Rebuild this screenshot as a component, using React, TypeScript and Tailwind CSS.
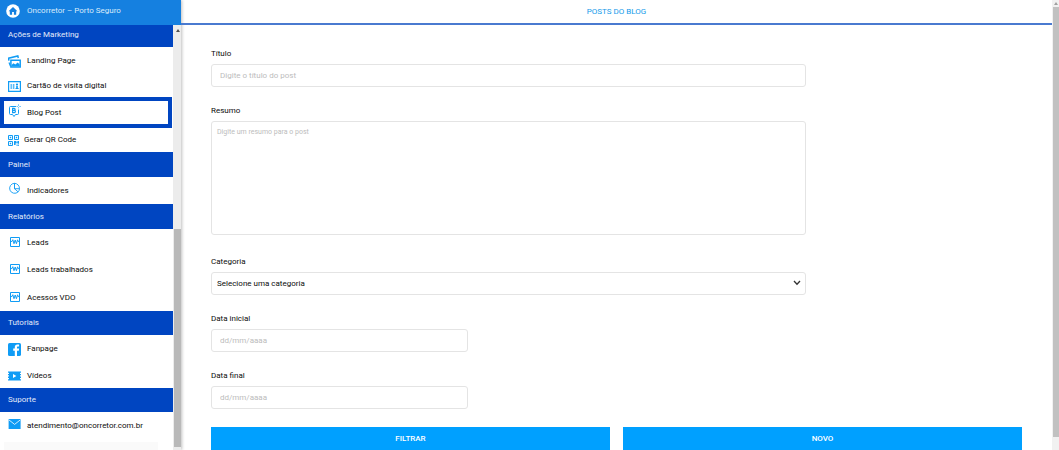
import type { ReactNode } from "react";

interface MenuItem {
  label: string;
  icon: ReactNode;
  className: string;
  active?: boolean;
}

interface MenuSection {
  title: string;
  className: string;
  items: MenuItem[];
}

const sections: MenuSection[] = [
  {
    title: "Ações de Marketing",
    className: "h-[22px] pb-0.5",
    items: [
      { label: "Landing Page", icon: <PicturesIcon />, className: "h-7 gap-1.5" },
      { label: "Cartão de visita digital", icon: <CardIcon />, className: "h-[22px] gap-1.5" },
      { label: "Blog Post", icon: <BlogIcon />, className: "h-[31px] gap-1.5", active: true },
      { label: "Gerar QR Code", icon: <QrIcon />, className: "h-6 gap-1" },
    ],
  },
  {
    title: "Painel",
    className: "h-[25px]",
    items: [{ label: "Indicadores", icon: <PieIcon />, className: "h-[27px] gap-1.5" }],
  },
  {
    title: "Relatórios",
    className: "h-[25px]",
    items: [
      { label: "Leads", icon: <PulseIcon />, className: "h-[27px] gap-1.5" },
      { label: "Leads trabalhados", icon: <PulseIcon />, className: "h-7 gap-1.5" },
      { label: "Acessos VDO", icon: <PulseIcon />, className: "h-[27px] gap-1.5" },
    ],
  },
  {
    title: "Tutoriais",
    className: "h-6",
    items: [
      { label: "Fanpage", icon: <FacebookIcon />, className: "h-7 gap-1.5" },
      { label: "Vídeos", icon: <FilmIcon />, className: "h-[25px] gap-1.5" },
    ],
  },
  {
    title: "Suporte",
    className: "h-6",
    items: [
      { label: "atendimento@oncorretor.com.br", icon: <MailIcon />, className: "h-7 gap-1.5" },
    ],
  },
];

const controlClass =
  "block w-full rounded-[3px] border border-[#e4e4e4] bg-white leading-3 outline-none placeholder:text-[#bcbcbc]";

export default function App() {
  return (
    <div className="flex h-screen overflow-hidden bg-white font-[Roboto,sans-serif] text-[8px] leading-3 text-[#0c0c0c]">
      <Sidebar />
      <main className="flex min-w-0 flex-1 flex-col">
        <header className="flex h-[25px] shrink-0 items-center justify-center border-b-2 border-[#4a7ad0]">
          <h1 className="text-[#159bea]">POSTS DO BLOG</h1>
        </header>
        <PostFilterForm />
      </main>
      <div className="flex w-[7px] shrink-0 flex-col bg-[#f1f1f1] pl-px" aria-hidden="true">
        <div className="flex h-[7px] items-center justify-center text-[#a0a0a0]">
          <ScrollArrow />
        </div>
        <div className="flex-1 bg-[#c1c1c1]" />
        <div className="h-[13px]" />
      </div>
    </div>
  );
}

function Sidebar() {
  return (
    <aside className="flex w-[181px] shrink-0 flex-col shadow-[1px_0_3px_rgba(0,0,0,0.25)]">
      <a
        href="#"
        className="flex h-[25px] shrink-0 items-center gap-[7px] bg-[#1580e0] pb-[3px] pl-1.5 text-[#d9ebfb]"
      >
        <HomeIcon />
        Oncorretor – Porto Seguro
      </a>
      <div className="flex min-h-0 flex-1">
        <nav className="min-w-0 flex-1 overflow-hidden">
          {sections.map((section) => (
            <section key={section.title}>
              <h2
                className={`flex items-center bg-[#0045c1] pl-2 text-[#e3ecfa] ${section.className}`}
              >
                {section.title}
              </h2>
              <ul>
                {section.items.map((item) => (
                  <li key={item.label}>
                    <MenuLink item={item} />
                  </li>
                ))}
              </ul>
            </section>
          ))}
          <div className="mt-[2px] mr-[15px] ml-1 h-4 bg-[#fafafa]" />
        </nav>
        <div className="flex w-2 shrink-0 flex-col bg-[#ececec] pl-px" aria-hidden="true">
          <div className="flex h-2.5 items-center justify-center text-[#505050]">
            <ScrollArrow />
          </div>
          <div className="flex-[194]" />
          <div className="flex-[218] bg-[#b9b9b9]" />
          <div className="h-[3px]" />
        </div>
      </div>
    </aside>
  );
}

function MenuLink({ item }: { item: MenuItem }) {
  return (
    <a
      href="#"
      aria-current={item.active ? "page" : undefined}
      className={`flex items-center whitespace-nowrap ${item.className} ${
        item.active ? "mr-px border-4 border-[#0045c1] pl-1" : "pl-2"
      }`}
    >
      <span className="flex shrink-0 text-[#109cf5]">{item.icon}</span>
      {item.label}
    </a>
  );
}

function PostFilterForm() {
  return (
    <form className="flex flex-col gap-[18px] px-[30px] pt-[23px]">
      <Field id="titulo" label="Título">
        <input
          id="titulo"
          type="text"
          placeholder="Digite o título do post"
          className={`${controlClass} h-[23px] px-2 text-[8px]`}
        />
      </Field>
      <Field id="resumo" label="Resumo">
        <textarea
          id="resumo"
          placeholder="Digite um resumo para o post"
          className={`${controlClass} mb-[3px] h-[114px] resize-none px-[5px] py-1 text-[7px]`}
        />
      </Field>
      <Field id="categoria" label="Categoria">
        <div className="relative">
          <select
            id="categoria"
            className={`${controlClass} h-[23px] appearance-none px-[5px] text-[8px]`}
          >
            <option>Selecione uma categoria</option>
          </select>
          <svg
            viewBox="0 0 8 6"
            className="pointer-events-none absolute top-2 right-[5px] h-1.5 w-2"
            fill="none"
            stroke="#333"
            strokeWidth="1.3"
          >
            <path d="M1 1l3 3.3L7 1" />
          </svg>
        </div>
      </Field>
      <Field id="data-inicial" label="Data inicial">
        <input
          id="data-inicial"
          type="text"
          placeholder="dd/mm/aaaa"
          className={`${controlClass} h-[23px] max-w-[257px] px-2 text-[8px]`}
        />
      </Field>
      <Field id="data-final" label="Data final">
        <input
          id="data-final"
          type="text"
          placeholder="dd/mm/aaaa"
          className={`${controlClass} h-[23px] max-w-[257px] px-2 text-[8px]`}
        />
      </Field>
      <div className="grid grid-cols-2 gap-[13px]">
        <button type="button" className="h-6 bg-[#00a0ff] font-medium text-white">
          FILTRAR
        </button>
        <button type="button" className="h-6 bg-[#00a0ff] font-medium text-white">
          NOVO
        </button>
      </div>
    </form>
  );
}

interface FieldProps {
  id: string;
  label: string;
  children: ReactNode;
}

function Field({ id, label, children }: FieldProps) {
  return (
    <div className="flex w-full max-w-[595px] flex-col gap-1">
      <label htmlFor={id}>{label}</label>
      {children}
    </div>
  );
}

function ScrollArrow() {
  return (
    <svg viewBox="0 0 4 3" className="h-[3px] w-1" fill="currentColor">
      <path d="M0 3l2-3 2 3z" />
    </svg>
  );
}

function HomeIcon() {
  return (
    <svg viewBox="0 0 14 14" className="size-3.5 shrink-0">
      <circle cx="7" cy="7" r="6.8" fill="#fff" />
      <path d="M7 3L2.6 7.2h1.2v3.6h2.3V8h1.8v2.8h2.3V7.2h1.2z" fill="#1580e0" />
    </svg>
  );
}

function PicturesIcon() {
  return (
    <svg viewBox="0 0 13 13" className="size-[13px]" fill="none" stroke="currentColor">
      <path d="M.9 5.6L.6 3.2 9.8 1l.5 2" strokeWidth="1.5" />
      <path d="M2.9 5.2h9.3v6.9H2.9z" strokeWidth="1.5" />
      <path d="M3.5 11.5V10l2-1.800 1.800 1.400 2.400-2.200 2 2v2.100z" fill="currentColor" stroke="none" />
      <path d="M1 7.500l1.500 3.700" strokeWidth="1.200" />
    </svg>
  );
}

function CardIcon() {
  return (
    <svg viewBox="0 0 13 11" className="h-[11px] w-[13px]">
      <path d="M.6.6h11.8v9.8H.6z" fill="none" stroke="currentColor" strokeWidth="1.2" />
      <path d="M2.5 3h1.4v5H2.5zM4.8 3h1.600v5H4.800z" fill="currentColor" opacity=".7" />
      <circle cx="9" cy="3.6" r="1.1" fill="currentColor" />
      <path d="M8.2 5h1.600v2h.8v1H7.500V7h.7z" fill="currentColor" />
    </svg>
  );
}

function BlogIcon() {
  return (
    <svg
      viewBox="0 0 13 14"
      className="mb-1 h-3.5 w-[13px]"
      fill="none"
      stroke="currentColor"
      strokeWidth="1"
    >
      <path d="M8 2.5H2.5q-1 0-1 1v6q0 1 1 1h2L6 12.500l1.500-2h2q1 0 1-1V5.500" />
      <path d="M4.600 4.400v4.200h1.700a1.100 1.100 0 0 0 0-2.200H4.600h1.500a1 1 0 0 0 0-2z" strokeWidth="1.2" />
      <path d="M10.500.4v1.400M10.500 3.200v1.200M8.600 2.500h1.200M11.400 2.500h1.400" opacity=".7" />
    </svg>
  );
}

function QrIcon() {
  return (
    <svg viewBox="0 0 12 12" className="size-3" fill="none" stroke="currentColor" strokeWidth="1">
      <path d="M.5 1.500h4v4h-4zM6.500 1.500h4v4h-4zM.5 7.500h4v4h-4z" />
      <path
        d="M1.800 2.800h1.400v1.400H1.800zM7.800 2.800h1.400v1.400H7.800zM1.800 8.800h1.400v1.400H1.800zM6 7h2.400v1.400h1V7H11v2.800H9.800V9.200H7.600V11H6zM8.600 10.400h1V12h-1zM10.200 10.600H11V12h-.8z"
        fill="currentColor"
        stroke="none"
      />
    </svg>
  );
}

function PieIcon() {
  return (
    <svg
      viewBox="0 0 13 13"
      className="mb-1 size-[13px]"
      fill="none"
      stroke="currentColor"
      strokeWidth=".9"
    >
      <path d="M6.500 1.300a5 5 0 1 0 3.600 8.600L6.500 6.700z" />
      <path d="M6.500 1.300a5.200 5.200 0 0 1 5 5.400h-5z" />
      <path d="M11.500 6.700a5 5 0 0 1-1.400 3.200" />
    </svg>
  );
}

function PulseIcon() {
  return (
    <svg viewBox="0 0 13 12" className="mb-0.5 h-3 w-[13px]" fill="none" stroke="currentColor">
      <path d="M2.5 1.5h9v9h-9z" strokeWidth="1" />
      <path d="M2.500 5.500h1.400l.9-1.800 1.200 4L7.200 4l1.200 3.700 1.200-3.900.6 1.700h1.300" strokeWidth="1" />
    </svg>
  );
}

function FacebookIcon() {
  return (
    <svg viewBox="0 0 13 13" className="size-[13px]">
      <rect width="13" height="13" rx="1.6" fill="currentColor" />
      <path
        d="M6.800 13V7.700H5.200V5.600h1.600V4.200c0-1.800 1-2.700 2.600-2.700h1.700v2H9.900c-.7 0-.9.3-.9.9v1.200h2.100l-.3 2.100H9V13z"
        fill="#fff"
      />
    </svg>
  );
}

function FilmIcon() {
  return (
    <svg viewBox="0 0 13 10" className="h-2.5 w-[13px]">
      <path
        d="M0 .5h13v1.200h-1v1.200h1v1.300h-1v1.400h1v1.300h-1v1.300h1v1.300H0V8.200h1V6.900H0V5.600h1V4.200H0V2.900h1V1.700H0z"
        fill="currentColor"
      />
      <path d="M5 3l3.400 2L5 7z" fill="#fff" />
    </svg>
  );
}

function MailIcon() {
  return (
    <svg viewBox="0 0 13 10" className="mb-1 h-2.5 w-[13px]">
      <path d="M.6 0h12v10H.6z" fill="currentColor" />
      <path d="M.8.8l5.800 4.600L12.400.8" fill="none" stroke="#fff" strokeWidth=".8" />
    </svg>
  );
}
